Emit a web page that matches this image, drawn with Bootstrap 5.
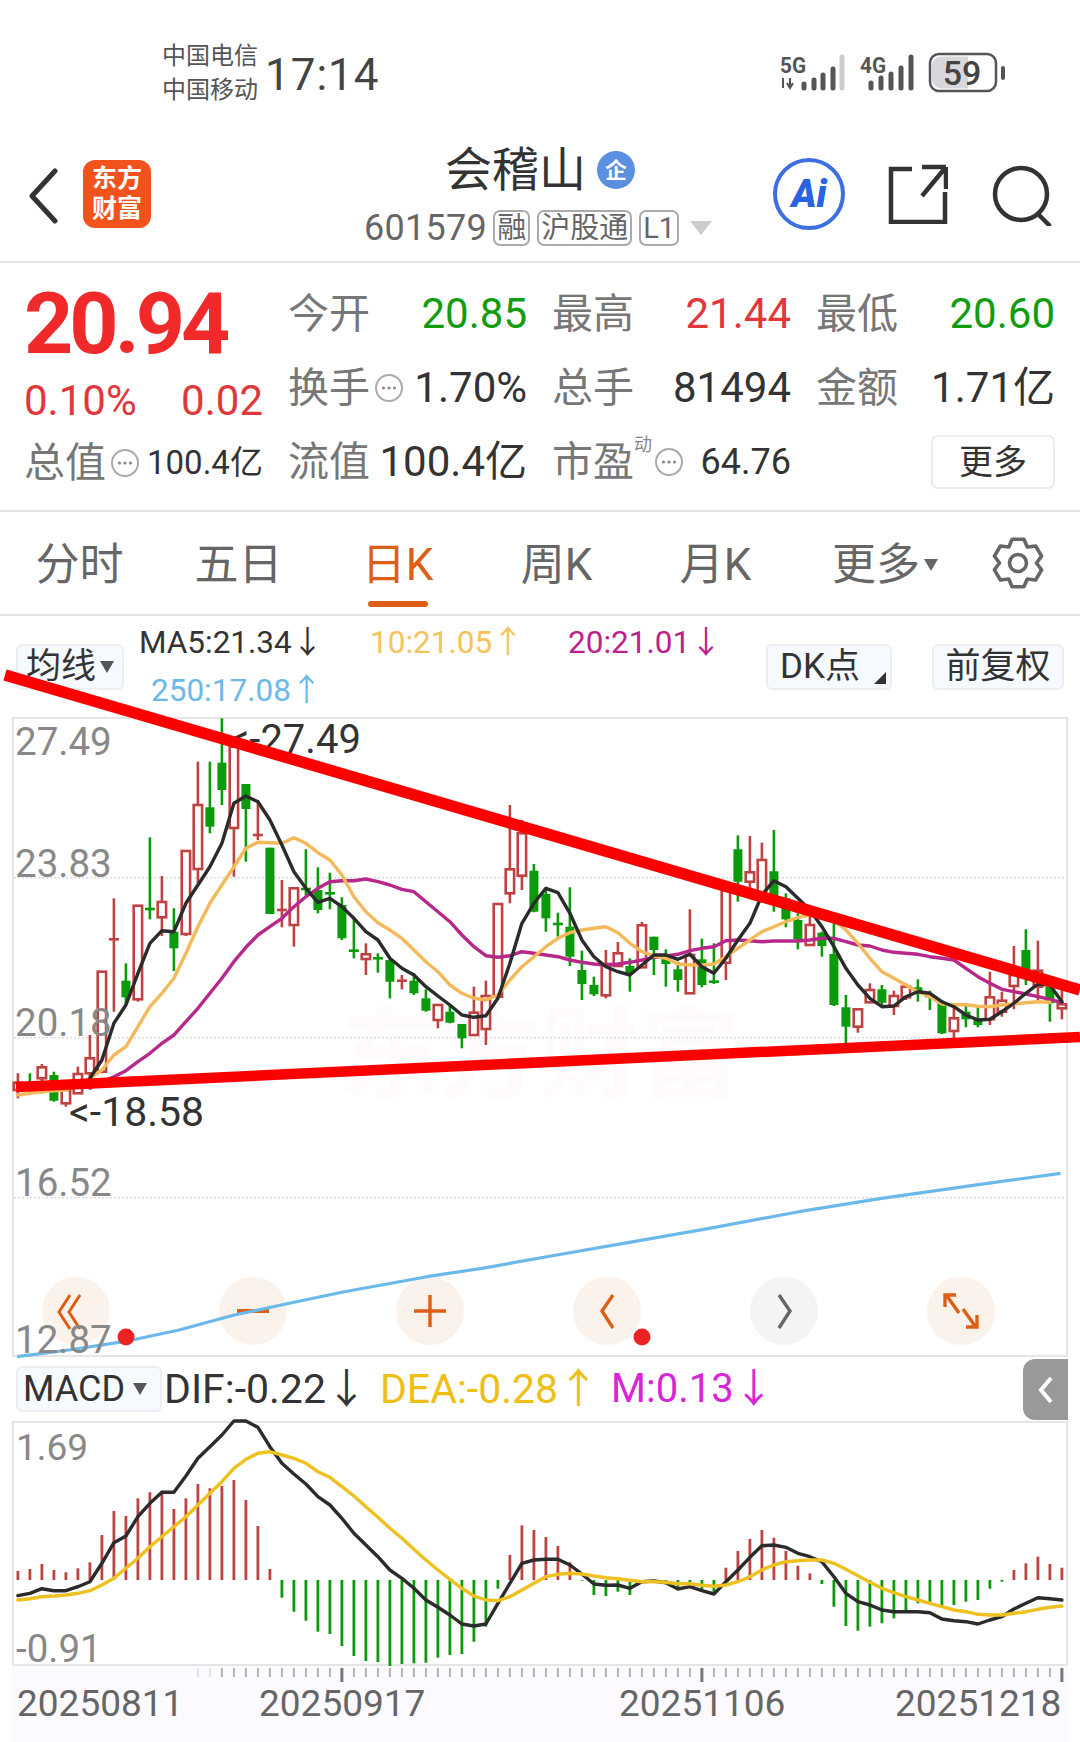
<!DOCTYPE html>
<html lang="zh">
<head>
<meta charset="utf-8">
<title>会稽山</title>
<link rel="stylesheet" href="https://cdn.jsdelivr.net/npm/bootstrap@5.3.0/dist/css/bootstrap.min.css">
<style>
html,body{margin:0;background:#fff;overflow:hidden}
body{width:1080px;height:1742px;position:relative;font-family:Roboto,"Noto Sans CJK SC",sans-serif;color:#333}
.st-bar{height:125px;padding-left:162px;padding-top:39px}
.st-car{font-size:24px;line-height:34px;color:#555;width:98px}
.st-time{font-size:44px;line-height:72px;color:#444;margin-left:5px;letter-spacing:1px}
.st-right{position:absolute;left:778px;top:50px}
.nav-top{height:138px;border-bottom:2px solid #e2e2e2}
.nav-l{width:364px;padding-left:28px;flex:none}
.back-i{margin-top:43px}
.logo-box{width:68px;height:68px;background:#f2521b;border-radius:12px;color:#fff;font-size:25px;line-height:30px;font-weight:700;margin-left:25px;margin-top:35px;font-family:Roboto,"Noto Sans CJK SC",sans-serif;text-align:center}
.nav-c{width:348px;padding-top:20px;flex:none;white-space:nowrap}
.name-t{font-size:47px;line-height:50px;color:#333;margin-left:4px}
.qi{width:38px;height:38px;border-radius:50%;background:#5b8fe0;color:#fff;font-size:22px;font-weight:700;margin-left:11px}
.code-row{margin-top:15px}
.code-t{font-size:36px;line-height:36px;color:#666;margin-right:6px;letter-spacing:.3px}
.tagb{border:2px solid #aaa;border-radius:7px;font-size:29px;line-height:32px;color:#666;padding:0 2px;margin-right:7px;height:36px;flex:none}
.nav-r{padding-left:61px;padding-top:33px;flex:none}
.ai-c{width:72px;height:72px;border-radius:50%;border:4px solid #3d6fe0;color:#2a63e0;font-size:38px;font-weight:900;font-style:italic;margin-right:43px}
.sh-i{margin-top:6px;margin-right:44px}
.se-i{margin-top:6px}
.qt{height:249px;border-bottom:2px solid #e2e2e2}
.ql{width:288px;padding-left:24px;padding-top:20px}
.big-p{font-size:86px;line-height:82px;font-weight:700;color:#f0292b;letter-spacing:-4px}
.chg{font-size:42px;line-height:72px;color:#e0373a;width:239px}
.zz{height:52px;width:239px}
.lab{font-size:41px;line-height:50px;color:#777}
.sm-v{font-size:33px;color:#333;white-space:nowrap;margin-left:3px}
.qr{padding-top:14px}
.qrow{height:74px}
.qc{width:239px;margin-right:25px}
.qv{font-size:42px;line-height:50px;color:#333;white-space:nowrap}
.qv-a{font-size:42px}
.qv-b{font-size:36px}
.up-t{color:#e0373a}.dn-t{color:#119c11}
.dot-i{width:30px;height:30px;margin:0 4px}
.dyn{font-size:18px;color:#888;align-self:flex-start;margin-top:-6px;margin-right:-2px}
.more-b{width:124px;height:54px;border:2px solid #ececec;border-radius:7px;background:#fff;font-size:34px;color:#333;padding:0;line-height:48px}
.tabs{height:104px;border-bottom:2px solid #e2e2e2;position:relative}
.tb{width:159px;font-size:44px;line-height:106px;color:#666;text-align:center;position:relative}
.tb.on{color:#dd5f17}
.tb.on::after{content:"";position:absolute;left:50%;margin-left:-30px;bottom:7px;width:60px;height:6px;border-radius:3px;background:#dd5f17}
.tb-m{width:180px;margin-left:0;padding-top:3px}
.gear-b{width:52px;height:52px;margin-left:17px}
.lg{height:101px;padding:0 16px}
.sel-b{background:#f6f9fe;border:2px solid #eceef2;border-radius:6px;height:46px;font-size:35px;line-height:40px;color:#333;padding:0}
.lg-m{margin-left:15px;width:600px;font-size:31.5px;line-height:48px}
.lg-a{width:231px}.lg-b{width:198px}
.c-or{color:#f5c35b}.c-pu{color:#c0208c}.c-bl{color:#6bb8ea}
.tri{width:0;height:0;border-left:7px solid transparent;border-right:7px solid transparent;border-top:12px solid #555;display:inline-block}
.dk-b{width:126px;padding-left:12px}
.kbox{margin:0 12px;height:640px;width:1056px;position:relative;background:#fff}
.kbox svg.pl{position:relative;z-index:1;display:block;overflow:visible}
.ctl{position:absolute;left:30px;top:560px;width:953px;z-index:0}
.ctl-b{width:68px;height:68px;border-radius:50%;background:#fcf2ec;border:0;padding:0}
.ctl-b.gy{background:#f6f3f7}
.mh{height:64px;position:relative;font-size:41px;line-height:64px;padding-left:16px;white-space:nowrap}
.mh-s{width:146px;height:46px;font-size:36px;line-height:42px;padding-left:5px;margin-right:2px;flex:none}
.mh-d1{margin-right:13px}
.mh-d2{margin-right:12px;color:#eec015}
.mh-d3{color:#d726d7;font-size:40px}
.mh-tab{position:absolute;left:1023px;top:2px;width:45px;height:61px;background:#999;border-radius:12px 0 0 12px}
.mbox{margin:0 12px;height:245px;width:1056px}
.mbox svg{overflow:visible}
.axis{margin:0 12px;height:76px;width:1056px;background:#fdfaff}
svg{display:block}
.over{position:absolute;left:0;top:0;z-index:5;pointer-events:none}
</style>
</head>
<body>
<svg width="0" height="0" style="position:absolute"><defs>
<symbol id="dots" viewBox="0 0 30 30"><circle cx="15" cy="15" r="13" fill="none" stroke="#aaa" stroke-width="2"/><circle cx="9.5" cy="15" r="1.6" fill="#888"/><circle cx="15" cy="15" r="1.6" fill="#888"/><circle cx="20.5" cy="15" r="1.6" fill="#888"/></symbol>
</defs></svg>

<div class="st-bar d-flex align-items-start">
  <div class="st-car"><div>中国电信</div><div>中国移动</div></div>
  <div class="st-time">17:14</div>
</div>
<svg class="st-right" width="240" height="50" viewBox="778 50 240 50" font-family="Roboto,sans-serif">
  <text x="780" y="73" font-size="22" font-weight="700" fill="#555" textLength="26" lengthAdjust="spacingAndGlyphs">5G</text>
  <path d="M783 78v10M790 78v10M787 83l3 5 3-5" fill="none" stroke="#555" stroke-width="2"/>
  <g stroke="#555" stroke-width="5" stroke-linecap="round"><path d="M804 88v-4M814 88v-8M823 88v-13M833 88v-19"/></g>
  <path d="M842 88V57" stroke="#ccc" stroke-width="5" stroke-linecap="round"/>
  <text x="860" y="73" font-size="22" font-weight="700" fill="#555" textLength="26" lengthAdjust="spacingAndGlyphs">4G</text>
  <g stroke="#555" stroke-width="5" stroke-linecap="round"><path d="M871 88v-5M881 88v-10M891 88v-14M901 88v-20M911 88V57"/></g>
  <rect x="930" y="54" width="66" height="37" rx="9" fill="none" stroke="#555" stroke-width="2.5"/>
  <path d="M941 56.5h27v32h-27a9 9 0 0 1-9-9v-14a9 9 0 0 1 9-9z" fill="#d8d8dc"/>
  <text x="962" y="85" font-size="34" font-weight="500" fill="#444" text-anchor="middle">59</text>
  <rect x="1001" y="66" width="4" height="14" rx="2" fill="#555"/>
</svg>

<div class="nav-top d-flex">
  <div class="nav-l d-flex align-items-start">
    <svg class="back-i" width="30" height="56" viewBox="0 0 30 56"><path d="M27 3 4 28l23 25" fill="none" stroke="#333" stroke-width="5" stroke-linecap="round" stroke-linejoin="round"/></svg>
    <div class="logo-box d-flex align-items-center justify-content-center"><div>东方<br>财富</div></div>
  </div>
  <div class="nav-c d-flex flex-column align-items-center">
    <div class="d-flex align-items-center"><span class="name-t">会稽山</span><span class="qi d-flex align-items-center justify-content-center">企</span></div>
    <div class="code-row d-flex align-items-center">
      <span class="code-t">601579</span><span class="tagb">融</span><span class="tagb">沪股通</span><span class="tagb">L1</span>
      <svg class="ms-1" width="22" height="14" viewBox="0 0 22 14"><path d="M0 0h22L11 14z" fill="#ccc"/></svg>
    </div>
  </div>
  <div class="nav-r d-flex align-items-start">
    <div class="ai-c d-flex align-items-center justify-content-center">Ai</div>
    <svg class="sh-i" width="60" height="60" viewBox="0 0 60 60"><path d="M24 5H3v53h54V28M34 3h24M58 3 34 32M58 3v22" fill="none" stroke="#333" stroke-width="4.5"/></svg>
    <svg class="se-i" width="60" height="62" viewBox="0 0 60 62"><circle cx="29" cy="30" r="26" fill="none" stroke="#333" stroke-width="4.5"/><path d="m46 50 11 11" stroke="#333" stroke-width="4.5" stroke-linecap="round"/></svg>
  </div>
</div>

<div class="qt d-flex">
  <div class="ql">
    <div class="big-p">20.94</div>
    <div class="chg d-flex justify-content-between"><span>0.10%</span><span>0.02</span></div>
    <div class="zz d-flex align-items-center"><span class="lab">总值</span><svg class="dot-i"><use href="#dots"/></svg><span class="sm-v">100.4亿</span></div>
  </div>
  <div class="qr">
    <div class="qrow d-flex align-items-center">
      <div class="qc d-flex justify-content-between align-items-center"><span class="lab">今开</span><span class="qv dn-t">20.85</span></div>
      <div class="qc d-flex justify-content-between align-items-center"><span class="lab">最高</span><span class="qv up-t">21.44</span></div>
      <div class="qc d-flex justify-content-between align-items-center"><span class="lab">最低</span><span class="qv dn-t">20.60</span></div>
    </div>
    <div class="qrow d-flex align-items-center">
      <div class="qc d-flex justify-content-between align-items-center"><span class="d-flex align-items-center"><span class="lab">换手</span><svg class="dot-i"><use href="#dots"/></svg></span><span class="qv">1.70%</span></div>
      <div class="qc d-flex justify-content-between align-items-center"><span class="lab">总手</span><span class="qv">81494</span></div>
      <div class="qc d-flex justify-content-between align-items-center"><span class="lab">金额</span><span class="qv">1.71亿</span></div>
    </div>
    <div class="qrow d-flex align-items-center">
      <div class="qc d-flex justify-content-between align-items-center"><span class="lab">流值</span><span class="qv qv-a">100.4亿</span></div>
      <div class="qc d-flex justify-content-between align-items-center"><span class="d-flex align-items-center"><span class="lab">市盈</span><span class="dyn">动</span><svg class="dot-i"><use href="#dots"/></svg></span><span class="qv qv-b">64.76</span></div>
      <div class="qc d-flex justify-content-end align-items-center"><button type="button" class="btn more-b">更多</button></div>
    </div>
  </div>
</div>

<div class="tabs d-flex">
  <div class="tb">分时</div><div class="tb">五日</div><div class="tb on">日K</div><div class="tb">周K</div><div class="tb">月K</div>
  <div class="tb tb-m d-flex align-items-center justify-content-center gap-1"><span>更多</span><span class="tri" style="border-top-color:#666"></span></div>
  <div class="d-flex align-items-center"><svg class="gear-b" viewBox="0 0 52 52"><path id="gearp" fill="none" stroke="#666" stroke-width="3.6" stroke-linejoin="round"/><circle cx="26" cy="26" r="8.5" fill="none" stroke="#666" stroke-width="3.6"/></svg></div>
</div>

<div class="lg d-flex align-items-center">
  <button type="button" class="btn sel-b d-flex align-items-center justify-content-center gap-1" style="width:108px"><span>均线</span><span class="tri"></span></button>
  <div class="lg-m">
    <div class="d-flex"><span class="lg-a">MA5:21.34↓</span><span class="lg-b c-or">10:21.05↑</span><span class="c-pu">20:21.01↓</span></div>
    <div class="c-bl" style="padding-left:12px">250:17.08↑</div>
  </div>
  <button type="button" class="btn sel-b dk-b ms-auto position-relative text-start">DK点<svg class="position-absolute" style="right:4px;bottom:4px" width="12" height="12"><path d="M12 0v12H0z" fill="#333"/></svg></button>
  <button type="button" class="btn sel-b" style="width:132px;margin-left:40px">前复权</button>
</div>

<div class="kbox">
  <div class="ctl d-flex justify-content-between">
    <button type="button" class="btn ctl-b" aria-label="first"><svg width="68" height="68"><path d="M28 18 17 35l11 17M38 18 27 35l11 17" fill="none" stroke="#dd5f17" stroke-width="3"/></svg></button>
    <button type="button" class="btn ctl-b" aria-label="minus"><svg width="68" height="68"><path d="M18 34h32" stroke="#dd5f17" stroke-width="4"/></svg></button>
    <button type="button" class="btn ctl-b" aria-label="plus"><svg width="68" height="68"><path d="M18 34h32M34 18v32" stroke="#dd5f17" stroke-width="3.4"/></svg></button>
    <button type="button" class="btn ctl-b" aria-label="prev"><svg width="68" height="68"><path d="M40 18 29 34l11 17" fill="none" stroke="#dd5f17" stroke-width="3.4"/></svg></button>
    <button type="button" class="btn ctl-b gy" aria-label="next"><svg width="68" height="68"><path d="m29 18 11 16-11 17" fill="none" stroke="#666" stroke-width="3.4"/></svg></button>
    <button type="button" class="btn ctl-b" aria-label="expand"><svg width="68" height="68"><path d="M32 36 20 19M18 30V18h11M36 32l12 17M50 38v12H39" fill="none" stroke="#dd5f17" stroke-width="3.4"/></svg></button>
  </div>
  <svg class="pl" id="kchart" width="1056" height="640" viewBox="12 717 1056 640" font-family="Roboto,sans-serif"></svg>
</div>

<div class="mh d-flex align-items-center">
  <div class="sel-b mh-s d-flex align-items-center gap-2"><span>MACD</span><span class="tri"></span></div>
  <span class="mh-d1">DIF:-0.22↓</span>
  <span class="mh-d2">DEA:-0.28↑</span>
  <span class="mh-d3">M:0.13↓</span>
  <div class="mh-tab d-flex align-items-center justify-content-center"><svg width="20" height="30"><path d="M15 3 5 15l10 12" fill="none" stroke="#fff" stroke-width="4"/></svg></div>
</div>

<div class="mbox"><svg id="mchart" width="1056" height="245" viewBox="12 1421 1056 245" font-family="Roboto,sans-serif"></svg></div>
<div class="axis"><svg id="axis" width="1056" height="76" viewBox="12 1666 1056 76" font-family="Roboto,sans-serif"></svg></div>

<svg class="over" width="1080" height="1742">
  <path d="M5 675 1080 990" stroke="#fc0000" stroke-width="11.5"/>
  <path d="M16 1087 1080 1037" stroke="#fc0000" stroke-width="10.5"/>
  <circle cx="126" cy="1337" r="8.5" fill="#ee2222"/>
  <circle cx="642" cy="1337" r="8.5" fill="#ee2222"/>
</svg>

<script>
(function(){
var X=function(i){return 17.9+12.0*i};
var Y=function(z){return (710+z/3).toFixed(1)};
var RED="#bf4242",GRN="#0a9a0a";
// colour, wick top, wick bottom, body top, body bottom (read in crop units)
var K=[["r",1090,1165,1118,1140],["g",1090,1150,1128,1134],["r",1062,1150,1072,1105],["g",1085,1175,1095,1172],["r",1130,1190,1140,1180],["r",1070,1150,1092,1150],["r",975,1105,1045,1090],["r",785,1090,785,1085],["r",565,905,688,688],["g",760,885,812,862],["r",587,875,587,868],["g",382,628,597,597],["r",498,678,576,622],["g",595,783,665,715],["r",423,678,423,672],["r",155,520,285,477],["g",155,370,292,350],["g",25,285,158,240],["r",110,500,110,354],["g",222,455,222,297],["r",270,390,375,375],["g",413,612,413,612],["r",510,652,600,600],["r",535,710,535,645],["g",418,555,537,537],["g",472,610,540,600],["g",488,598,550,550],["g",562,690,585,685],["g",620,745,722,722],["r",700,795,733,747],["g",730,788,745,745],["g",745,865,750,815],["r",795,838,812,812],["g",790,855,812,850],["g",838,905,865,902],["r",885,955,885,930],["g",885,940,905,938],["g",942,1015,942,985],["r",830,978,908,975],["r",812,1005,858,957],["r",582,862,582,860],["r",285,580,478,550],["r",330,540,370,497],["g",462,607,482,605],
["g",535,665,552,625],["g",608,680,642,642],["g",532,768,650,740],["g",722,870,780,822],["g",800,858,825,853],["r",720,865,762,856],["r",696,770,730,768],["g",745,845,768,790],["r",636,775,646,772],["g",680,795,680,720],["g",718,830,740,762],["g",755,845,778,810],["r",598,850,735,850],["g",686,832,748,825],["g",700,822,815,815],["r",540,810,540,758],["g",376,575,418,515],["r",378,560,487,515],["r",398,560,450,560],["g",360,605,484,560],["g",550,652,565,628],["g",610,718,630,688],["r",610,705,645,705],["g",665,740,668,708],["g",640,888,732,885],["g",855,1000,892,950],["r",898,968,898,950],["r",820,878,840,877],["g",825,888,838,878],["r",842,915,858,888],["r",820,870,830,862],["g",808,875,832,848],["g",842,900,858,858],["g",870,972,880,970],["r",880,985,925,963],["g",880,952,905,928],["g",890,952,928,945],["r",785,945,862,928],["r",845,920,872,905],["r",708,898,795,828],["g",658,825,720,790],["r",692,875,782,830],["g",825,935,830,880],["r",830,928,883,895]];
var MA5=[1105,1050,940,885,790,700,662,665,580,525,470,400,280,258,275,330,405,485,535,577,565,590,625,665,690,745,775,795,830,858,885,915,922,917,865,760,640,580,535,548,610,690,740,770,785,795,765,735,735,748,733,770,790,745,690,640,555,512,530,565,600,650,710,775,825,865,890,888,860,845,850,875,890,915,930,928,905,880,850,822,825,875];
var MA10=[1155,1150,1145,1142,1140,1125,1105,1080,1035,1010,950,890,850,805,730,650,580,525,470,415,397,398,400,383,400,428,450,495,560,605,638,660,685,720,755,785,825,850,865,870,855,810,770,740,710,685,668,660,655,650,668,700,725,738,745,762,765,765,762,740,715,690,665,650,635,622,615,620,630,660,700,745,785,805,825,845,860,882,884,884,889,890,885,882,878,875,877];
var MA20=[1135,1115,1100,1082,1055,1030,1000,975,935,895,850,805,755,712,675,650,625,590,560,535,515,512,512,507,515,525,538,545,575,605,635,675,710,737,742,737,725,730,735,740,750,757,762,765,762,757,750,742,738,733,722,715,710,692,690,692,695,693,693,693,690,685,685,695,705,708,720,727,730,733,740,745,750,775,800,820,838,845,852,860,868,878];
var BL=[[25,680],[100,660],[180,635],[260,600],[340,555],[420,520],[500,485],[620,440],[700,415],[800,378],[920,335],[1030,295],[1160,245],[1280,205],[1400,170],[1540,130]];
function poly(a,st,c,w,Yf){var p=a.map(function(v,k){return X(st+k).toFixed(1)+","+Yf(v)}).join(" ");return '<polyline points="'+p+'" fill="none" stroke="'+c+'" stroke-width="'+w+'" stroke-linejoin="round" stroke-linecap="round"/>'}
var s='<rect x="13" y="718" width="1054" height="638" fill="none" stroke="#e6e6e6" stroke-width="2"/>';
s+='<text x="540" y="1090" font-size="100" fill="#fefafd" font-family="Noto Sans CJK SC,sans-serif" font-weight="700" text-anchor="middle">东方财富</text>';
[877.7,1037.7,1197.7].forEach(function(y){s+='<path d="M14 '+y+'H1066" stroke="#dcdcdc" stroke-width="1.5" stroke-dasharray="2 2"/>'});
K.forEach(function(k,i){var x=X(i),c=k[0]=="r"?RED:GRN,a=Y(k[1]),b=Y(k[2]),t=Y(k[3]),d=Y(k[4]);
 s+='<path d="M'+x+' '+a+'V'+b+'" stroke="'+c+'" stroke-width="2.6"/>';
 if(k[3]==k[4]){s+='<path d="M'+(x-5)+' '+t+'h10" stroke="'+c+'" stroke-width="2.6"/>';}
 else if(k[0]=="r"){s+='<rect x="'+(x-4.2)+'" y="'+t+'" width="8.4" height="'+(d-t).toFixed(1)+'" fill="#fff" stroke="'+c+'" stroke-width="2.6"/>';}
 else{s+='<rect x="'+(x-4.5)+'" y="'+t+'" width="9" height="'+(d-t).toFixed(1)+'" fill="'+c+'"/>';}
});
s+=poly(MA20,6,"#b8278a",3.4,Y)+poly(MA10,0,"#f4b95a",3.4,Y)+poly(MA5,6,"#2b2b2b",3.4,Y);
s+='<polyline points="'+BL.map(function(p){return (p[0]/1.452).toFixed(1)+","+(1130+p[1]/3).toFixed(1)}).join(" ")+'" fill="none" stroke="#6bb8ea" stroke-width="3.2" stroke-linejoin="round"/>';
[["27.49",755],["23.83",877],["20.18",1036],["16.52",1196],["12.87",1353]].forEach(function(l){s+='<text x="15" y="'+l[1]+'" font-size="38.5" fill="#888">'+l[0]+'</text>'});
s+='<text x="229" y="753" font-size="40" fill="#333">&lt;-27.49</text><text x="69" y="1126" font-size="41" fill="#333">&lt;-18.58</text>';
document.getElementById("kchart").innerHTML=s;

var YM=function(z){return (1400+z/3).toFixed(1)};
var H=[513,507,492,510,517,505,487,405,333,348,295,277,272,327,295,252,265,258,240,300,378,507,593,635,662,695,702,738,768,783,786,798,792,790,788,773,765,762,725,680,566,465,376,390,411,438,487,542,585,588,575,585,545,543,548,570,555,575,582,503,453,417,390,413,453,497,520,552,620,678,692,680,670,655,630,610,605,620,615,605,600,566,545,510,490,470,492,503];
var DIF=[587,580,566,572,572,560,545,490,428,408,350,310,277,277,228,175,140,105,63,63,82,140,190,222,252,290,315,355,400,435,470,510,535,565,600,622,645,672,678,672,610,550,490,480,478,478,495,522,552,556,555,565,545,543,548,567,560,572,582,545,510,472,437,435,442,460,470,485,530,580,605,615,630,635,635,635,638,657,662,665,672,660,650,627,610,593,596,600];
var DEA=[600,596,590,588,585,580,572,555,535,505,475,440,410,380,350,315,280,245,205,178,160,155,165,175,190,215,232,260,288,320,352,385,415,448,480,510,538,565,588,600,602,590,570,550,530,523,520,522,528,533,536,541,545,545,547,551,551,556,559,555,545,530,510,495,485,482,480,480,490,508,527,547,565,578,590,600,610,620,630,635,643,645,645,640,635,628,622,618];
var m='<rect x="13" y="1422" width="1054" height="243" fill="none" stroke="#e6e6e6" stroke-width="2"/>';
H.forEach(function(v,i){var x=X(i);m+='<path d="M'+x+' '+YM(540)+'V'+YM(v)+'" stroke="'+(v<540?RED:GRN)+'" stroke-width="2.8"/>'});
m+=poly(DIF,0,"#2b2b2b",3.4,YM)+poly(DEA,0,"#eec020",3.4,YM);
m+='<text x="16" y="1460" font-size="37" fill="#888">1.69</text><text x="16" y="1662" font-size="38.5" fill="#888">-0.91</text>';
document.getElementById("mchart").innerHTML=m;

var a='';
for(var i=15;i<88;i++){var maj=(i==27||i==57||i==87);a+='<path d="M'+X(i)+' 1668V'+(maj?1682:1677)+'" stroke="'+(maj?"#777":(i<17?"#e4e4e4":"#b4b4b4"))+'" stroke-width="'+(maj?3:2)+'"/>';}
[["20250811",17],["20250917",259],["20251106",619],["20251218",895]].forEach(function(l){a+='<text x="'+l[1]+'" y="1716" font-size="37" fill="#666">'+l[0]+'</text>'});
document.getElementById("axis").innerHTML=a;

var pts=[];for(var t=0;t<6;t++){var c=-90+60*t;[[-30,18.5],[-14,24.5],[14,24.5],[30,18.5]].forEach(function(o){var r=(c+o[0])*Math.PI/180;pts.push((26+o[1]*Math.cos(r)).toFixed(1)+" "+(26+o[1]*Math.sin(r)).toFixed(1))})}
document.getElementById("gearp").setAttribute("d","M"+pts.join("L")+"Z");
})();
</script>
<script src="https://cdn.jsdelivr.net/npm/bootstrap@5.3.0/dist/js/bootstrap.bundle.min.js"></script>
</body>
</html>
